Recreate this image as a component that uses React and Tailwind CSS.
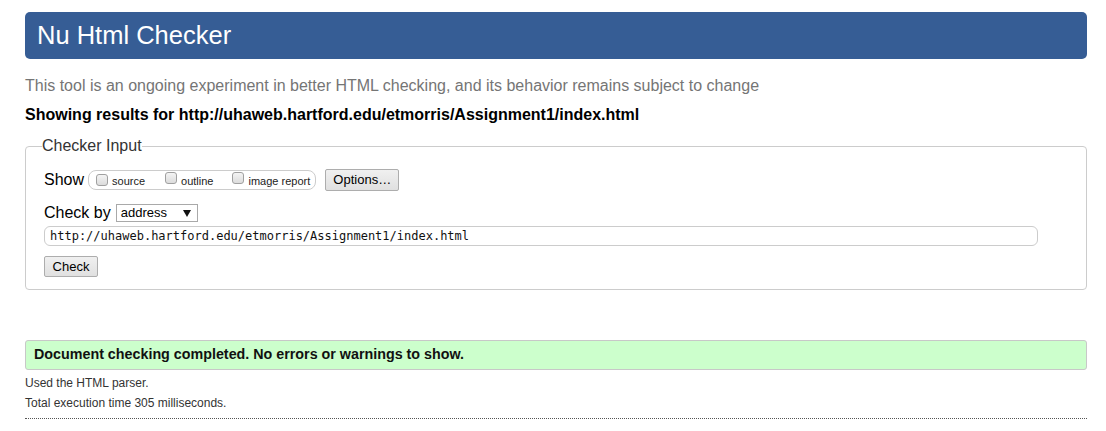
import React from "react";

function Box() {
  return (
    <span className="inline-block w-[12px] h-[12px] rounded-[3px] border border-[#a0a0a0] bg-gradient-to-b from-[#f4f4f4] to-[#dcdcdc] shrink-0" />
  );
}

export default function App() {
  return (
    <div className="min-h-[431px] bg-white pl-[25px] pr-[19px] pt-[12px] text-black" style={{ fontFamily: '"Liberation Sans", Arial, sans-serif' }}>
      <div className="h-[47px] rounded-[5px] bg-[#365d95] flex items-center pl-[12px]">
        <h1 className="text-[25.5px] leading-none text-white">Nu Html Checker</h1>
      </div>
      <p className="mt-[17px] text-[16px] leading-[20px] text-[#757575]">
        This tool is an ongoing experiment in better HTML checking, and its behavior remains subject to change
      </p>
      <p className="mt-[9px] text-[16px] leading-[20px] font-bold">
        Showing results for http://uhaweb.hartford.edu/etmorris/Assignment1/index.html
      </p>
      <fieldset className="mt-[11px] border border-[#cccccc] rounded-[4px] pl-[18px] pr-[48px] pt-[13px] pb-[12px]">
        <legend className="-ml-[2px] text-[16px] leading-[20px] text-[#333]">Checker Input</legend>
        <div className="flex items-center h-[22px]">
          <span className="text-[16px] leading-[20px]">Show</span>
          <span className="ml-[4px] flex items-center h-[20px] rounded-[8px] border border-[#cccccc] pl-[7px] pr-[5px] text-[11px] text-[#222]">
            <Box />
            <span className="ml-[4px] mt-[3px]">source</span>
            <span className="ml-[20px]"><Box /></span>
            <span className="ml-[4px] mt-[3px]">outline</span>
            <span className="ml-[19px]"><Box /></span>
            <span className="ml-[4px] mt-[3px]">image report</span>
          </span>
          <span className="ml-[9px] h-[22px] w-[74px] flex items-center justify-center rounded-[2px] border border-[#adadad] bg-gradient-to-b from-[#f0f0f0] to-[#e0e0e0] text-[13px]">
            Options…
          </span>
        </div>
        <div className="flex items-center h-[20px] mt-[12px]">
          <span className="text-[16px] leading-[20px]">Check by</span>
          <span className="ml-[5px] h-[18px] w-[82px] flex items-center justify-between border border-[#a9a9a9] bg-white pl-[4px] pr-[6px] text-[13px]">
            address
            <svg width="8" height="7" viewBox="0 0 8 7"><path d="M0 0h8L4 7z" fill="#111" /></svg>
          </span>
        </div>
        <div className="mt-[3px] h-[20px] rounded-[6px] border border-[#cccccc] flex items-center pl-[5px] text-[12px] text-[#111]" style={{ fontFamily: '"DejaVu Sans Mono", "Liberation Mono", monospace' }}>
          http://uhaweb.hartford.edu/etmorris/Assignment1/index.html
        </div>
        <div className="mt-[10px] flex">
          <span className="h-[21px] w-[54px] flex items-center justify-center rounded-[2px] border border-[#adadad] bg-gradient-to-b from-[#f0f0f0] to-[#e0e0e0] text-[13px]">
            Check
          </span>
        </div>
      </fieldset>
      <div className="mt-[50px] h-[30px] rounded-[3px] border border-[#c8c8c8] bg-[#ccffcc] flex items-center pl-[8px] text-[14.3px] font-bold text-[#111]">
        Document checking completed. No errors or warnings to show.
      </div>
      <p className="mt-[3px] text-[12px] leading-[20px] text-[#333]">Used the HTML parser.</p>
      <p className="text-[12px] leading-[20px] text-[#333]">Total execution time 305 milliseconds.</p>
      <div className="mt-[5px] border-t border-dotted border-[#555]" />
    </div>
  );
}
